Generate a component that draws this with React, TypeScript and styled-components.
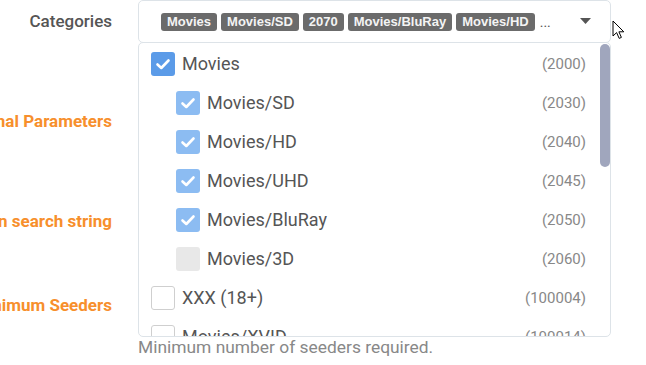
import React from "react";
import styled, { createGlobalStyle } from "styled-components";

const Global = createGlobalStyle`
  html, body { margin: 0; padding: 0; background: #fff; overflow: hidden; }
  body { font-family: Roboto, "Liberation Sans", sans-serif; }
  * { box-sizing: border-box; }
`;

const Form = styled.div`
  display: flex;
  flex-direction: column;
  width: 646px;
  height: 365px;
  position: relative;
`;

const Row = styled.div<{ $space: number }>`
  display: grid;
  grid-template-columns: 112px 473px;
  column-gap: 26px;
  margin-top: ${(p) => p.$space}px;
  align-items: start;
`;

const Label = styled.div<{ $h: number; $accent?: boolean }>`
  display: flex;
  justify-content: flex-end;
  align-items: center;
  height: ${(p) => p.$h}px;
  white-space: nowrap;
  font-size: 17px;
  font-weight: ${(p) => (p.$accent ? 700 : 500)};
  color: ${(p) => (p.$accent ? "#f78f2c" : "#555")};
`;

const FieldCol = styled.div`
  display: flex;
  flex-direction: column;
`;

const Input = styled.div`
  height: 38px;
  border: 1px solid #dde3e8;
  border-radius: 4px;
`;

const Help = styled.div`
  margin-top: 13px;
  font-size: 17.4px;
  color: #888;
  white-space: nowrap;
`;

const Select = styled.div`
  position: relative;
  height: 43px;
  border: 1px solid #dde3e8;
  border-radius: 5px;
  display: flex;
  align-items: center;
  padding: 0 19px 0 22px;
  gap: 4px;
`;

const Chip = styled.span`
  display: inline-flex;
  align-items: center;
  height: 18px;
  padding: 0 6px;
  border-radius: 3px;
  background: #6b6b6b;
  color: #f4f4f4;
  font-family: "Liberation Sans", Arial, sans-serif;
  font-weight: 700;
  font-size: 13px;
  white-space: nowrap;
`;

const More = styled.span`
  font-size: 14px;
  color: #555;
  margin-left: 1px;
  flex: 1;
  line-height: 18px;
`;

const Caret = styled.svg`
  width: 11px;
  height: 6px;
  flex: none;
  margin-top: -2px;
`;

const Dropdown = styled.div`
  position: absolute;
  top: 100%;
  left: -1px;
  width: 473px;
  height: 295px;
  padding-top: 1px;
  border: 1px solid #dde3e8;
  border-radius: 5px;
  background: #fff;
  overflow: hidden;
  z-index: 5;
`;

const Thumb = styled.div`
  position: absolute;
  top: 1px;
  right: 0;
  width: 10px;
  height: 123px;
  border-radius: 5px;
  background: #a0a6bd;
`;

const Item = styled.div<{ $level: number }>`
  display: flex;
  align-items: center;
  height: 39px;
  padding-left: ${(p) => 12 + p.$level * 25}px;
  padding-right: 24px;
`;

const Box = styled.span<{ $state: "on" | "dim" | "off" | "disabled" }>`
  flex: none;
  width: 24px;
  height: 24px;
  border-radius: 3px;
  margin-right: 7px;
  display: inline-flex;
  align-items: center;
  justify-content: center;
  background: ${(p) =>
    p.$state === "on" ? "#5b9be8" : p.$state === "dim" ? "#8cbcf2" : p.$state === "disabled" ? "#e8e8e8" : "#fff"};
  border: ${(p) => (p.$state === "off" ? "1px solid #cfcfcf" : "none")};
`;

const ItemText = styled.span`
  flex: 1;
  font-size: 18px;
  color: #555;
  white-space: nowrap;
`;

const Count = styled.span`
  font-size: 15px;
  color: #888;
`;

const Cursor = styled.svg`
  position: absolute;
  left: 612px;
  top: 20px;
  width: 14px;
  height: 20px;
  z-index: 10;
`;

type State = "on" | "dim" | "off" | "disabled";
const items: { name: string; code: string; level: number; state: State }[] = [
  { name: "Movies", code: "2000", level: 0, state: "on" },
  { name: "Movies/SD", code: "2030", level: 1, state: "dim" },
  { name: "Movies/HD", code: "2040", level: 1, state: "dim" },
  { name: "Movies/UHD", code: "2045", level: 1, state: "dim" },
  { name: "Movies/BluRay", code: "2050", level: 1, state: "dim" },
  { name: "Movies/3D", code: "2060", level: 1, state: "disabled" },
  { name: "XXX (18+)", code: "100004", level: 0, state: "off" },
  { name: "Movies/XVID", code: "100014", level: 0, state: "off" },
  { name: "TV", code: "5000", level: 0, state: "off" },
];

const Check = () => (
  <svg width="16" height="16" viewBox="0 0 16 16">
    <polyline points="2.5,8.5 6.3,12 13.5,4.5" fill="none" stroke="#fff" strokeWidth="2.6" strokeLinecap="round" strokeLinejoin="round" />
  </svg>
);

export default function App() {
  return (
    <>
      <Global />
      <Form>
        <Row $space={0}>
          <Label $h={41}>Categories</Label>
          <Select>
            <Chip>Movies</Chip>
            <Chip>Movies/SD</Chip>
            <Chip>2070</Chip>
            <Chip>Movies/BluRay</Chip>
            <Chip>Movies/HD</Chip>
            <More>...</More>
            <Caret viewBox="0 0 11 6">
              <path d="M0 0 H11 L5.5 6 Z" fill="#555" />
            </Caret>
            <Dropdown>
              {items.map((it) => (
                <Item key={it.code} $level={it.level}>
                  <Box $state={it.state}>{(it.state === "on" || it.state === "dim") && <Check />}</Box>
                  <ItemText>{it.name}</ItemText>
                  <Count>({it.code})</Count>
                </Item>
              ))}
              <Thumb />
            </Dropdown>
          </Select>
        </Row>
        <Row $space={59}>
          <Label $h={38} $accent>Additional Parameters</Label>
          <Input />
        </Row>
        <Row $space={62}>
          <Label $h={38} $accent>Keywords in search string</Label>
          <Input />
        </Row>
        <Row $space={46}>
          <Label $h={38} $accent>Minimum Seeders</Label>
          <FieldCol>
            <Input />
            <Help>Minimum number of seeders required.</Help>
          </FieldCol>
        </Row>
        <Cursor viewBox="0 0 14 20">
          <path d="M1 1 L1 16 L4.6 12.6 L7.2 18.4 L9.4 17.4 L6.9 11.8 L11.8 11.8 Z" fill="#fff" stroke="#000" strokeWidth="1" strokeLinejoin="round" />
        </Cursor>
      </Form>
    </>
  );
}
